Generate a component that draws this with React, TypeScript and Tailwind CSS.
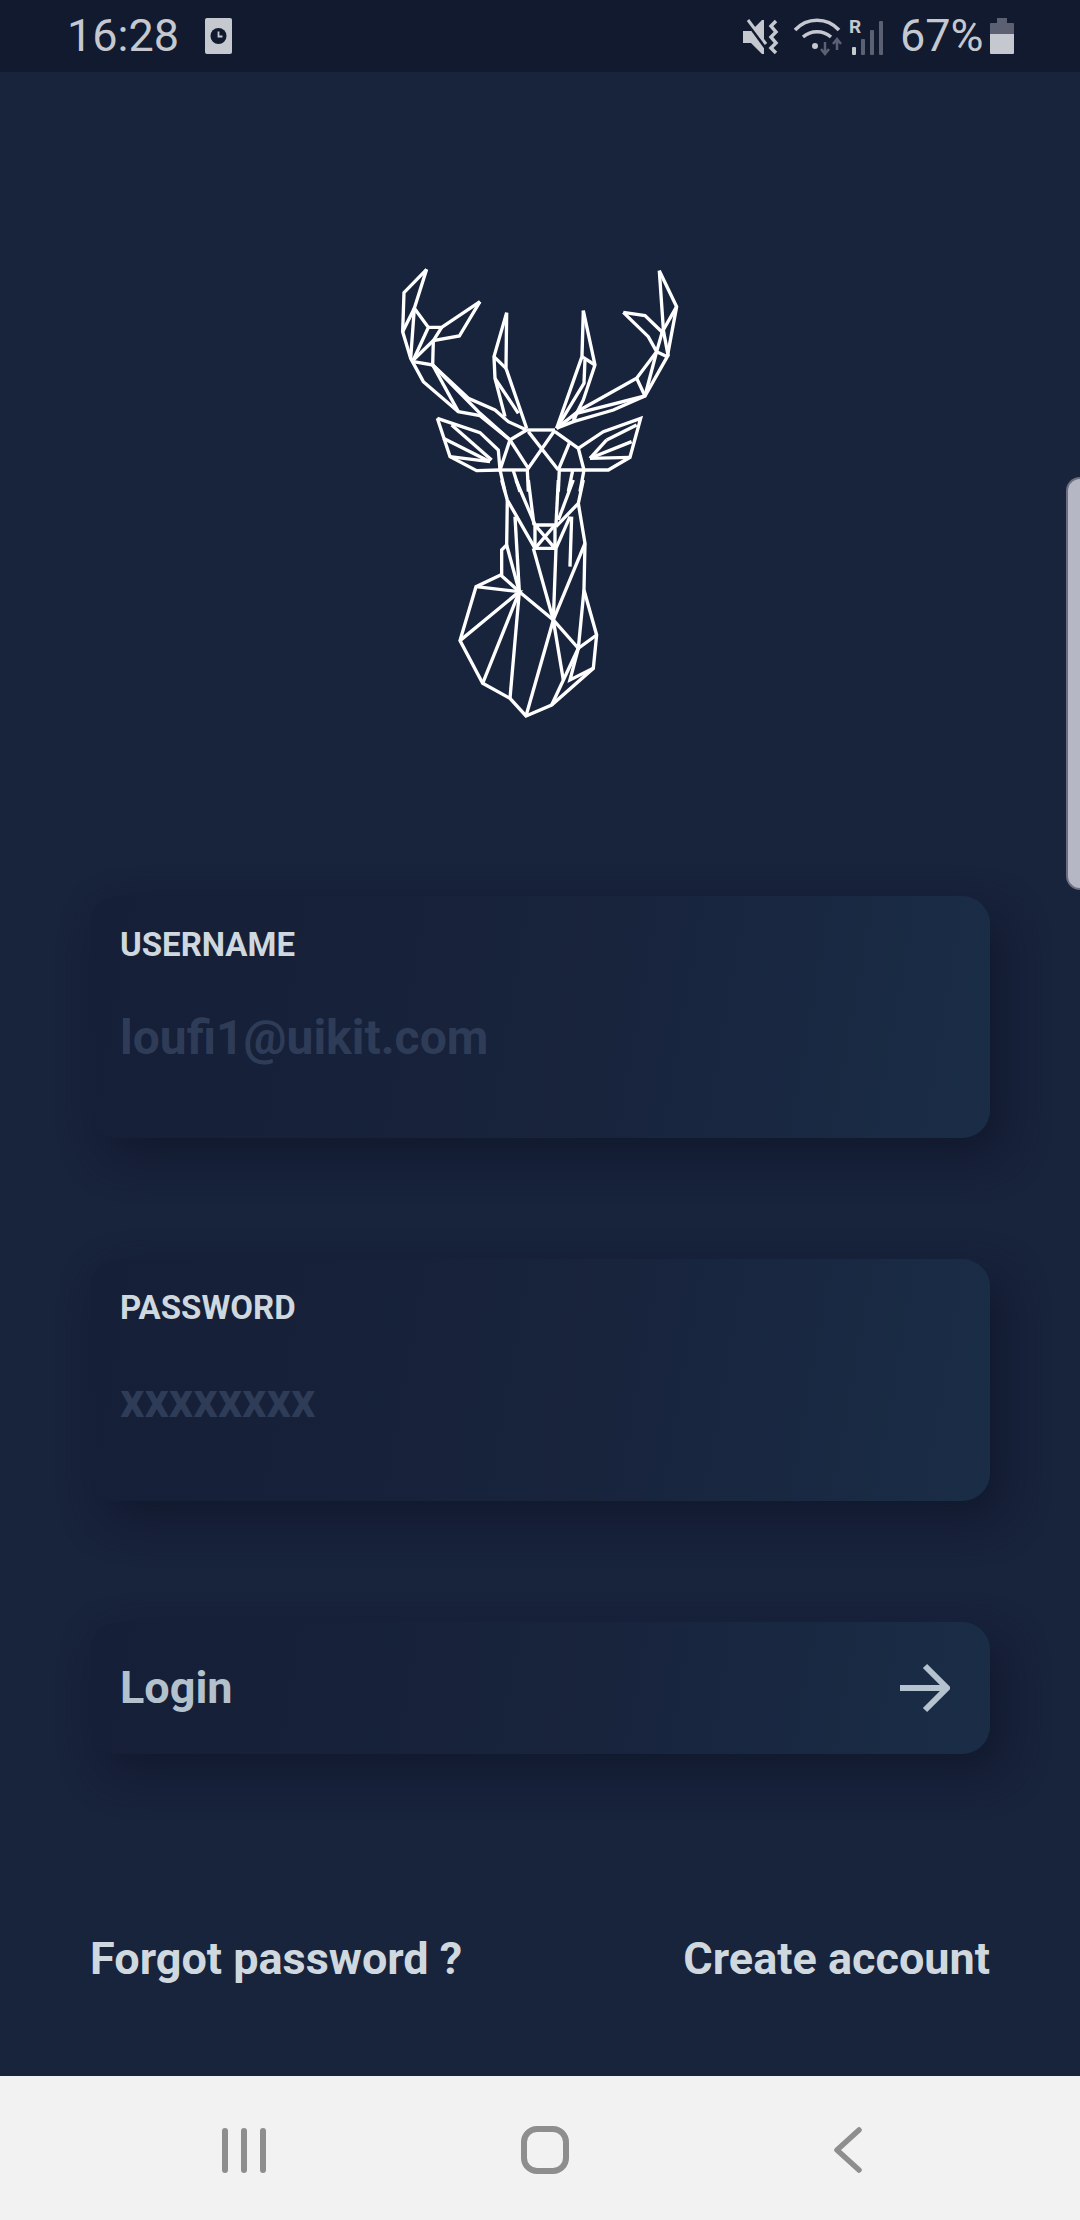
import React from 'react';

// antlers, ears and forehead, traced at 3x from (380,250)
const topLines = [
  '140,58 72,128 68,245 92,325 130,395 235,485 300,497 390,570',
  '140,58 103,175 92,325',
  '103,175 68,245',
  '103,175 145,232 100,330',
  '300,155 185,232 145,232',
  '300,155 238,258 160,272 100,330',
  '185,232 160,272 158,345 100,335',
  '158,345 235,485',
  '158,345 265,445 345,480 385,515 440,540',
  '158,345 300,490 390,570',
  '380,188 342,320 345,385 375,500',
  '380,188 378,355 440,535',
  '342,320 378,355',
  '345,385 415,490',
  '610,182 606,320 530,535',
  '610,182 645,345 610,450 580,510',
  '606,320 645,345',
  '615,330 612,400 530,535',
  '838,62 890,170 862,320 795,438 590,490 580,515 530,535',
  '838,62 850,235 830,305',
  '890,170 850,240 865,320',
  '730,187 795,197 850,250',
  '730,187 805,260 830,305 770,385 600,480 530,535',
  '830,305 795,438',
  '770,385 795,438',
  '830,305 862,320',
  '580,515 700,480 795,438',
  '440,540 525,540',
  '440,540 390,570 360,660',
  '390,570 445,655 525,540',
  '445,545 535,660',
  '525,545 595,595 612,660',
  '570,575 535,660',
  '355,660 445,660',
  '535,660 685,660 750,622 782,505 670,545 595,595',
  '172,505 210,620 290,662 360,660',
  '172,505 300,548 355,600 360,660',
  '215,525 335,630',
  '190,565 330,635',
  '210,620 330,635',
  '755,575 630,625',
  '680,570 630,625',
  '750,622 630,625',
  '680,570 770,525',
  '360,660 375,725',
  '400,662 420,725',
  '442,660 445,725',
  '538,660 535,725',
  '578,662 565,725',
  '612,660 600,725',
];

// neck and chest, traced at 3x from (430,480)
const bottomLines = [
  '215,0 232,60 315,205',
  '232,60 230,195 215,210 215,285',
  '258,0 305,110 315,135',
  '295,0 312,135',
  '385,0 378,135',
  '430,0 385,120',
  '460,0 445,70 378,140',
  '445,70 465,190 462,330 500,465 490,565 365,675 288,708 240,655 158,610 90,482 138,320 212,285 268,335',
  '315,135 375,135 375,205 315,205 315,135 375,205',
  '375,135 315,205',
  '230,195 268,335',
  '138,320 268,335 90,482',
  '268,335 158,610',
  '268,335 240,655',
  '268,335 370,420 445,505 500,465',
  '255,110 268,335',
  '370,420 288,708',
  '370,420 400,600',
  '370,420 378,205',
  '370,420 465,190',
  '310,205 370,420',
  '425,110 420,260',
  '420,110 378,205',
  '445,505 365,675',
  '445,505 420,600 490,565',
  '462,330 445,505',
];

const DeerLogo = () => (
  <svg width="320" height="480" viewBox="380 250 320 480" fill="none" stroke="#ffffff" strokeWidth="10" strokeLinejoin="miter">
    <g transform="translate(380 250) scale(0.3333)">
      {topLines.map((p) => <polyline key={p} points={p} />)}
    </g>
    <g transform="translate(430 480) scale(0.3333)">
      {bottomLines.map((p) => <polyline key={p} points={p} />)}
    </g>
  </svg>
);

const NetworkIcons = () => (
  <svg width="145" height="72" viewBox="740 0 145 72" className="block">
    {/* mute + vibrate */}
    <path d="M743 31h8l11-11 2 0v34h-2l-11-11h-8z" fill="#c5c8cf" />
    <path d="M746 21l19 26" stroke="#111a2e" strokeWidth="3" />
    <path d="M748 20l18 24" stroke="#c5c8cf" strokeWidth="3" />
    <path d="M776 21l-5 5 5 6-5 5 5 6-5 5 5 5" fill="none" stroke="#c5c8cf" strokeWidth="3.5" />
    {/* wifi */}
    <path d="M795 30c12-13 32-13 44 0" fill="none" stroke="#c5c8cf" strokeWidth="3.5" />
    <path d="M803 37c8-7 20-7 28 0" fill="none" stroke="#c5c8cf" strokeWidth="3.5" />
    <circle cx="815" cy="46" r="3" fill="#c5c8cf" />
    <path d="M825 42v11M821 49l4 5 4-5" fill="none" stroke="#5b6172" strokeWidth="2.5" />
    <path d="M837 50v-10M833 44l4-5 4 5" fill="none" stroke="#5b6172" strokeWidth="2.5" />
    {/* roaming + signal */}
    <text x="849" y="33" fill="#c5c8cf" fontSize="19" fontWeight="700" fontFamily="Roboto, sans-serif">R</text>
    <rect x="852" y="47" width="4" height="8" rx="1" fill="#c5c8cf" />
    <rect x="861" y="39" width="4" height="16" rx="1" fill="#5b6172" />
    <rect x="870" y="30" width="4" height="25" rx="1" fill="#5b6172" />
    <rect x="879" y="21" width="4" height="34" rx="1" fill="#5b6172" />
  </svg>
);

const BatteryIcon = () => (
  <svg width="24" height="36" viewBox="990 19 24 36" className="block">
    <path d="M997 19h10v5h6a1 1 0 0 1 1 1v10h-24v-10a1 1 0 0 1 1-1h6z" fill="#5b6172" />
    <path d="M990 35h24v19a1 1 0 0 1-1 1h-22a1 1 0 0 1-1-1z" fill="#c5c8cf" />
  </svg>
);

const Field = ({ label, value }: { label: string; value: string }) => (
  <div className="h-[242px] rounded-[28px] bg-[linear-gradient(100deg,#151f37_0%,#18233c_55%,#1a2d47_100%)] shadow-[14px_18px_40px_rgba(15,22,40,0.75)] px-[30px] pt-[28px]">
    <div className="text-[33px] leading-[42px] font-bold text-[#cfd8df]">{label}</div>
    <div className="mt-[44px] text-[48px] leading-[56px] font-bold text-[#2f3c57]">{value}</div>
  </div>
);

export default function App() {
  return (
    <div className="relative w-[1080px] h-[2220px] flex flex-col overflow-hidden bg-[#18233c] font-['Roboto',sans-serif]">
      <div className="h-[72px] bg-[#111a2e] flex items-center justify-between pl-[67px] pr-[66px]">
        <div className="flex items-center gap-[26px]">
          <span className="text-[45px] leading-[72px] font-normal text-[#c5c8cf]">16:28</span>
          <svg width="27" height="36" viewBox="0 0 27 36">
            <rect width="27" height="36" rx="2" fill="#c5c8cf" />
            <circle cx="13.5" cy="18" r="8" fill="#111a2e" />
            <path d="M13.5 13.5v5h4" fill="none" stroke="#c5c8cf" strokeWidth="1.8" />
          </svg>
        </div>
        <div className="flex items-center">
          <NetworkIcons />
          <span className="ml-[15px] w-[90px] text-[45px] leading-[72px] font-normal text-[#c5c8cf]">67%</span>
          <BatteryIcon />
        </div>
      </div>

      <div className="flex-1 px-[90px] pt-[178px]">
        <div className="ml-[290px]">
          <DeerLogo />
        </div>
        <div className="mt-[166px] flex flex-col gap-[121px]">
          <Field label="USERNAME" value="loufi1@uikit.com" />
          <Field label="PASSWORD" value="xxxxxxxx" />
          <div className="h-[132px] rounded-[28px] bg-[linear-gradient(100deg,#151f37_0%,#18233c_55%,#1a2d47_100%)] shadow-[14px_18px_40px_rgba(15,22,40,0.75)] pl-[30px] pr-[40px] flex items-center justify-between">
            <span className="text-[45px] font-bold text-[#b3c1cd]">Login</span>
            <svg width="50" height="50" viewBox="0 0 50 50" fill="none" stroke="#b4c3cf" strokeWidth="6">
              <path d="M0 25h45M25 3l22 22-22 22" />
            </svg>
          </div>
        </div>
        <div className="mt-[177px] flex justify-between text-[45px] leading-[56px] font-bold text-[#cfd8df]">
          <span>Forgot password ?</span>
          <span>Create account</span>
        </div>
      </div>

      <div className="h-[144px] bg-[#f2f2f2] relative flex items-center justify-between pl-[222px] pr-[218px] pt-[4px]">
        <div className="flex gap-[13px]">
          <div className="w-[6px] h-[45px] rounded-full bg-[#8e8e8e]" />
          <div className="w-[6px] h-[45px] rounded-full bg-[#8e8e8e]" />
          <div className="w-[6px] h-[45px] rounded-full bg-[#8e8e8e]" />
        </div>
        <div className="w-[48px] h-[48px] rounded-[16px] border-[6px] border-[#8e8e8e]" />
        <div className="w-[38px] pl-[10px]">
          <svg width="28" height="46" viewBox="0 0 28 46" fill="none" stroke="#8e8e8e" strokeWidth="5.5" strokeLinecap="round" strokeLinejoin="round" className="block">
            <path d="M25 3L3 23l22 20" />
          </svg>
        </div>
      </div>

      <div className="absolute right-0 top-[477px] w-[14px] h-[413px] rounded-l-[14px] bg-[#b5b8c4] border-l-2 border-y-2 border-[#6b7080]" />
    </div>
  );
}
